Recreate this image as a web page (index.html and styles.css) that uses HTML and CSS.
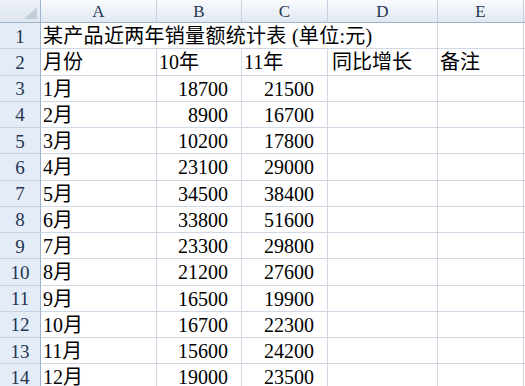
FILE: index.html
```html
<!DOCTYPE html>
<html lang="zh">
<head>
<meta charset="utf-8">
<title>某产品近两年销量额统计表</title>
<link rel="stylesheet" href="styles.css">
</head>
<body>
<div class="sheet">
  <div class="hd corner"><span class="tri"></span></div>
  <div class="hd col">A</div>
  <div class="hd col">B</div>
  <div class="hd col">C</div>
  <div class="hd col">D</div>
  <div class="hd col">E</div>
  <div class="hd col rest"></div>

  <div class="hd rowh">1</div>
  <div class="c title">某产品近两年销量额统计表 (单位:元)</div>
  <div class="c"></div>
  <div class="c rest"></div>

  <div class="hd rowh">2</div>
  <div class="c">月份</div>
  <div class="c">10年</div>
  <div class="c">11年</div>
  <div class="c dl">同比增长</div>
  <div class="c">备注</div>
  <div class="c rest"></div>

  <div class="hd rowh">3</div>
  <div class="c">1月</div>
  <div class="c n">18700</div>
  <div class="c n">21500</div>
  <div class="c"></div><div class="c"></div><div class="c rest"></div>

  <div class="hd rowh">4</div>
  <div class="c">2月</div>
  <div class="c n">8900</div>
  <div class="c n">16700</div>
  <div class="c"></div><div class="c"></div><div class="c rest"></div>

  <div class="hd rowh">5</div>
  <div class="c">3月</div>
  <div class="c n">10200</div>
  <div class="c n">17800</div>
  <div class="c"></div><div class="c"></div><div class="c rest"></div>

  <div class="hd rowh">6</div>
  <div class="c">4月</div>
  <div class="c n">23100</div>
  <div class="c n">29000</div>
  <div class="c"></div><div class="c"></div><div class="c rest"></div>

  <div class="hd rowh">7</div>
  <div class="c">5月</div>
  <div class="c n">34500</div>
  <div class="c n">38400</div>
  <div class="c"></div><div class="c"></div><div class="c rest"></div>

  <div class="hd rowh">8</div>
  <div class="c">6月</div>
  <div class="c n">33800</div>
  <div class="c n">51600</div>
  <div class="c"></div><div class="c"></div><div class="c rest"></div>

  <div class="hd rowh">9</div>
  <div class="c">7月</div>
  <div class="c n">23300</div>
  <div class="c n">29800</div>
  <div class="c"></div><div class="c"></div><div class="c rest"></div>

  <div class="hd rowh">10</div>
  <div class="c">8月</div>
  <div class="c n">21200</div>
  <div class="c n">27600</div>
  <div class="c"></div><div class="c"></div><div class="c rest"></div>

  <div class="hd rowh">11</div>
  <div class="c">9月</div>
  <div class="c n">16500</div>
  <div class="c n">19900</div>
  <div class="c"></div><div class="c"></div><div class="c rest"></div>

  <div class="hd rowh">12</div>
  <div class="c">10月</div>
  <div class="c n">16700</div>
  <div class="c n">22300</div>
  <div class="c"></div><div class="c"></div><div class="c rest"></div>

  <div class="hd rowh">13</div>
  <div class="c">11月</div>
  <div class="c n">15600</div>
  <div class="c n">24200</div>
  <div class="c"></div><div class="c"></div><div class="c rest"></div>

  <div class="hd rowh">14</div>
  <div class="c">12月</div>
  <div class="c n">19000</div>
  <div class="c n">23500</div>
  <div class="c"></div><div class="c"></div><div class="c rest"></div>
</div>
</body>
</html>
```
FILE: styles.css
```css
html, body {
  margin: 0;
  padding: 0;
  background: #ffffff;
}
body {
  width: 525px;
  height: 386px;
  overflow: hidden;
}
.sheet {
  display: grid;
  grid-template-columns: 41px 116px 85px 86px 110px 86px 1fr;
  grid-template-rows: 23px repeat(14, 26.25px);
  width: 525px;
  font-family: "Liberation Serif", "Noto Sans CJK SC", serif;
}
.hd {
  box-sizing: border-box;
  color: #1f3552;
  font-size: 17px;
  display: flex;
  align-items: center;
  justify-content: center;
}
.col {
  background: linear-gradient(#f8fafd, #e2e8f1);
  border-right: 1px solid #c5d1e0;
  border-bottom: 1px solid #9fb3cc;
  padding-top: 1px;
}
.col.rest {
  border-right: none;
}
.corner {
  position: relative;
  background: linear-gradient(#eef2f8, #dfe6f0);
  border-right: 1px solid #9fb3cc;
  border-bottom: 1px solid #9fb3cc;
}
.tri {
  position: absolute;
  right: 3px;
  bottom: 3px;
  width: 0;
  height: 0;
  border-left: 13px solid transparent;
  border-bottom: 12px solid #c3cedd;
}
.rowh {
  background: #e4ecf7;
  border-right: 1px solid #9fb3cc;
  border-bottom: 1px solid #c5d1e0;
  padding-top: 2px;
  font-size: 19px;
}
.c {
  box-sizing: border-box;
  border-right: 1px solid #d0d7e5;
  border-bottom: 1px solid #d0d7e5;
  font-size: 20px;
  color: #000000;
  display: flex;
  align-items: center;
  padding: 1px 2px 0 2px;
  white-space: nowrap;
  overflow: visible;
  line-height: 1;
}
.c.rest {
  border-right: none;
}
.title {
  grid-column: span 4;
  letter-spacing: 0.3px;
}
.dl {
  padding-left: 4px;
}
.n {
  justify-content: flex-end;
  padding-right: 13px;
}
```
